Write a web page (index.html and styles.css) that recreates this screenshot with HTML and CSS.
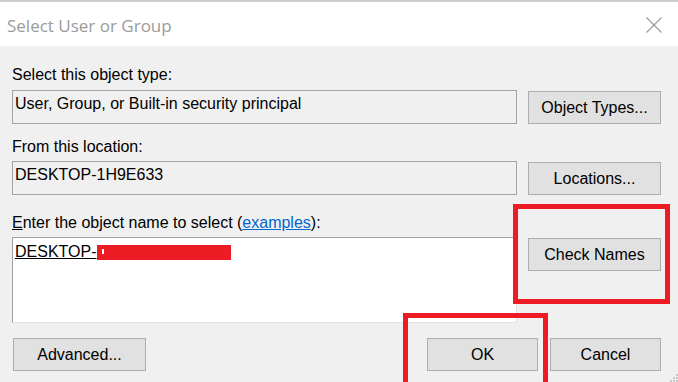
FILE: index.html
```html
<!DOCTYPE html>
<html lang="en">
<head>
    <meta charset="UTF-8">
    <meta name="viewport" content="width=device-width, initial-scale=1.0">
    <title>Select User or Group</title>
    <link rel="stylesheet" href="styles.css">
</head>
<body>

    <div class="dialog">

        <!-- Title Bar -->
        <div class="titlebar">
            <span class="title">Select User or Group</span>
            <svg class="close" width="16" height="16" viewBox="0 0 16 16">
                <path d="M0.5 0.5 L15.5 15.5 M15.5 0.5 L0.5 15.5" stroke="#9a9a9a" stroke-width="1.1" fill="none"/>
            </svg>
        </div>

        <!-- Dialog Content -->
        <div class="content">
            <div class="label first">Select this object type:</div>
            <div class="row">
                <div class="box">User, Group, or Built-in security principal</div>
                <button class="btn">Object Types...</button>
            </div>

            <div class="label second">From this location:</div>
            <div class="row">
                <div class="box">DESKTOP-1H9E633</div>
                <button class="btn">Locations...</button>
            </div>

            <div class="label third"><u>E</u>nter the object name to select (<a href="#" class="link">examples</a>):</div>
            <div class="row">
                <div class="box area">
                    <span class="resolved">DESKTOP-</span><span class="redacted"><i></i></span>
                </div>
                <button class="btn">Check Names</button>
            </div>

            <div class="actions">
                <button class="btn wide">Advanced...</button>
                <div class="spacer"></div>
                <button class="btn small">OK</button>
                <button class="btn small">Cancel</button>
            </div>
        </div>

        <!-- Annotation boxes -->
        <div class="mark mark-check"></div>
        <div class="mark mark-ok"></div>

        <svg class="grip" width="10" height="10" viewBox="0 0 10 10">
            <rect x="8" y="2" width="2" height="2" fill="#c8c8c8"/>
            <rect x="5" y="5" width="2" height="2" fill="#c8c8c8"/>
            <rect x="8" y="5" width="2" height="2" fill="#c8c8c8"/>
            <rect x="2" y="8" width="2" height="2" fill="#c8c8c8"/>
            <rect x="5" y="8" width="2" height="2" fill="#c8c8c8"/>
            <rect x="8" y="8" width="2" height="2" fill="#c8c8c8"/>
        </svg>
    </div>

</body>
</html>
```

FILE: styles.css
```css
/* Global Styles */
body {
    margin: 0;
    padding: 0;
    background-color: #f0f0f0;
    font-family: "Liberation Sans", Arial, sans-serif;
    font-size: 16px;
    color: #000;
    overflow: hidden;
}

.dialog {
    position: relative;
    width: 678px;
    height: 382px;
    overflow: hidden;
}

/* Title Bar */
.titlebar {
    display: flex;
    align-items: center;
    justify-content: space-between;
    height: 44px;
    padding: 0 16px 0 7px;
    background-color: #fff;
    border-top: 2px solid #cdcdcd;
}

.title {
    font-family: "Open Sans", sans-serif;
    font-size: 17px;
    color: #9b9b9b;
    padding-top: 3px;
}

.close {
    margin-top: 2px;
}

/* Content */
.content {
    padding: 19px 17px 0 12px;
}

.label {
    line-height: 20px;
    height: 20px;
    white-space: nowrap;
}

.label.second {
    margin-top: 13px;
}

.label.third {
    margin-top: 18px;
}

.link {
    color: #0066cc;
}

.row {
    display: flex;
    align-items: flex-start;
    gap: 11px;
    margin-top: 4px;
}

.label.first + .row {
    margin-top: 5px;
}

.box {
    box-sizing: border-box;
    width: 505px;
    height: 34px;
    padding: 3px 2px;
    line-height: 20px;
    border: 1px solid #a3a3a3;
    background-color: #f0f0f0;
    white-space: nowrap;
}

.box.area {
    height: 86px;
    padding-top: 4px;
    background-color: #fff;
    border-color: #a0a0a0 #e3e3e3 #e3e3e3 #a0a0a0;
}

.resolved {
    text-decoration: underline;
}

.redacted {
    display: inline-block;
    position: relative;
    width: 134px;
    height: 15px;
    vertical-align: -3px;
    background-color: #ed1c24;
}

.redacted i {
    position: absolute;
    left: 5px;
    top: 4px;
    width: 2px;
    height: 5px;
    background-color: #fff;
}

/* Buttons */
.btn {
    box-sizing: border-box;
    width: 133px;
    height: 33px;
    margin-top: 1px;
    padding: 0;
    font-family: "Liberation Sans", Arial, sans-serif;
    font-size: 16px;
    color: #000;
    background-color: #e1e1e1;
    border: 1px solid #adadad;
    border-radius: 0;
}

.actions {
    display: flex;
    gap: 12px;
    margin-top: 14px;
}

.btn.wide {
    margin-left: 1px;
}

.btn.small {
    width: 111px;
}

.spacer {
    flex: 1;
}

/* Red annotation frames */
.mark {
    position: absolute;
    box-sizing: border-box;
    border: 5px solid #ed1c24;
}

.mark-check {
    left: 513px;
    top: 204px;
    width: 157px;
    height: 100px;
}

.mark-ok {
    left: 403px;
    top: 313px;
    width: 145px;
    height: 90px;
}

.grip {
    position: absolute;
    right: 0;
    bottom: 0;
}
```
